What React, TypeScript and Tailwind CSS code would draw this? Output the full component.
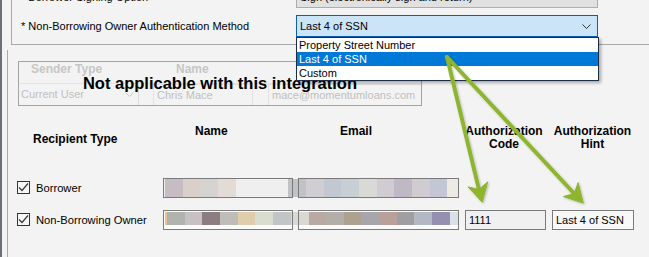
import React from "react";

type Block = [number, string];

const row1Name: Block[] = [[1, "#efefef"], [18, "#c5bcc4"], [17, "#d9d1c9"], [18, "#d5d4d0"], [18, "#e3dcd6"], [52, "#efefef"], [0, "#c0c3c6"]];
const row1Email: Block[] = [[7, "#c0c3c6"], [18, "#d0ced3"], [17, "#c2c8d2"], [18, "#c8cfd4"], [18, "#d9dad5"], [17, "#d1cbd2"], [18, "#c1b8c6"], [18, "#d0ccd0"], [17, "#c3c6d4"], [0, "#ede9e3"]];
const row2Name: Block[] = [[1, "#fafafa"], [2, "#e8c48a"], [18, "#b1b3ae"], [17, "#c7c1c4"], [18, "#8b7d82"], [18, "#bfbdb8"], [17, "#dfcdab"], [18, "#d8ddd0"], [18, "#c2c5c8"], [0, "#dad8d3"]];
const row2Email: Block[] = [[10, "#dad8d3"], [17, "#b8aaa2"], [18, "#b2aea8"], [17, "#ada190"], [18, "#a8a6ab"], [18, "#b9a19a"], [17, "#a19ea3"], [18, "#b3b8c5"], [18, "#9690b0"], [0, "#d9e0e6"]];

// blurred-out pixels, 0 width = take the rest
function Mosaic({ blocks, h }: { blocks: Block[]; h: string }) {
  return (
    <div className={`flex w-full ${h}`}>
      {blocks.map(([w, c], i) => (
        <div key={i} className={w ? "shrink-0 h-full" : "flex-1 h-full"} style={{ width: w || undefined, background: c }} />
      ))}
    </div>
  );
}

function Chevron({ color = "#333" }: { color?: string }) {
  return (
    <svg width="9" height="5" viewBox="0 0 9 5" className="shrink-0">
      <path d="M0.5 0.5 L4.5 4.5 L8.5 0.5" fill="none" stroke={color} strokeWidth="1" />
    </svg>
  );
}

function Check() {
  return (
    <div className="w-[13px] h-[13px] shrink-0 border border-[#333] bg-[#f7f7f7]">
      <svg width="11" height="11" viewBox="0 0 11 11">
        <path d="M1 5.5 L4 8.5 L10 1.5" fill="none" stroke="#3a3a3a" strokeWidth="1.2" />
      </svg>
    </div>
  );
}

export default function App() {
  return (
    <div className="relative w-[649px] h-[257px] overflow-hidden bg-[#f3f3f3] flex font-['Liberation_Sans',Arial,sans-serif] text-black">
      <div className="w-[2px] shrink-0 h-full bg-[#6b6f76]" />

      <div className="flex-1 flex flex-col min-w-0">
        {/* signing options group */}
        <div className="ml-[9px] h-[45px] shrink-0 border-l border-b border-[#a9a9a9] flex flex-col text-[11px]">
          <div className="flex items-center h-[21px] -mt-[13px] shrink-0">
            <div className="w-[284px] pl-[9px]">* Borrower Signing Option</div>
            <div className="w-[302px] h-full flex items-center justify-between bg-[#e1e1e1] border border-[#adadad] pl-[3px] pr-[6px]">
              <span>Sign (electronically sign and return)</span>
              <Chevron />
            </div>
          </div>
          <div className="flex items-center h-[22px] mt-[7px] shrink-0">
            <div className="w-[284px] pl-[9px]">* Non-Borrowing Owner Authentication Method</div>
            <div className="w-[302px] h-full flex items-center justify-between bg-[#cce4f7] border border-[#0a5fb4] pl-[3px] pr-[6px]">
              <span>Last 4 of SSN</span>
              <Chevron />
            </div>
          </div>
        </div>

        <div className="ml-[5px] mt-[5px] flex-1 border-l border-[#a9a9a9] flex flex-col">
          {/* sender box */}
          <div className="relative ml-[10px] mt-[11px] w-[404px] h-[45px] shrink-0 border border-[#a3a3a3] flex flex-col">
            <div className="flex items-start h-[22px] pt-[1px] leading-[13px] text-[12px] font-bold text-[#c6c6c6] border-b border-[#e4e4e4]">
              <div className="w-[135px] pl-[12px]">Sender Type</div>
              <div className="pl-[22px]">Name</div>
            </div>
            <div className="flex flex-1 text-[11px] text-[#c0c0c0]">
              <div className="w-[120px] flex items-center justify-between pl-[2px] pr-[4px] border-r border-[#dcdcdc]">
                <span>Current User</span>
                <Chevron color="#c8c8c8" />
              </div>
              <div className="ml-[14px] w-[100px] flex items-center pl-[3px] border border-b-0 border-[#e2e2e2]">Chris Mace</div>
              <div className="ml-[15px] flex-1 flex items-center pl-[3px] border-l border-t border-[#e2e2e2]">mace@momentumloans.com</div>
            </div>
            <div className="absolute inset-0 flex items-center justify-center text-[16.5px] font-bold text-black">
              Not applicable with this integration
            </div>
          </div>

          {/* recipients */}
          <div className="ml-[9px] mt-[19px] flex flex-col">
            <div className="flex h-[28px] text-[12px] font-bold leading-[13px]">
              <div className="w-[146px] pl-[16px] self-center">Recipient Type</div>
              <div className="w-[135px] pl-[32px]">Name</div>
              <div className="w-[167px] pl-[42px]">Email</div>
              <div className="w-[87px]"><div className="w-[78px] text-center">Authorization<br />Code</div></div>
              <div className="w-[81px] text-center">Authorization<br />Hint</div>
            </div>

            <div className="flex items-center h-[20px] mt-[25px] text-[11.2px]">
              <div className="w-[146px] flex items-center gap-[6px]">
                <Check />
                <span>Borrower</span>
              </div>
              <div className="w-[130px] h-full border border-[#7a7a7a] bg-[#efefef]">
                <Mosaic blocks={row1Name} h="h-full" />
              </div>
              <div className="w-[5px] h-[18px] bg-[#c0c3c6]" />
              <div className="w-[161px] h-full border border-[#7a7a7a] bg-[#efefef]">
                <Mosaic blocks={row1Email} h="h-full" />
              </div>
            </div>

            <div className="flex items-center h-[20px] mt-[12px] text-[11.2px]">
              <div className="w-[146px] flex items-center gap-[6px]">
                <Check />
                <span>Non-Borrowing Owner</span>
              </div>
              <div className="w-[130px] h-full border border-[#7a7a7a] bg-[#fbfbfb] pt-[1px]">
                <Mosaic blocks={row2Name} h="h-[13px]" />
              </div>
              <div className="w-[5px] h-[13px] self-start mt-[2px] bg-[#dad8d3]" />
              <div className="w-[161px] h-full border border-[#7a7a7a] bg-[#fbfbfb] pt-[1px]">
                <Mosaic blocks={row2Email} h="h-[13px]" />
              </div>
              <div className="ml-[6px] w-[81px] h-full border border-[#7a7a7a] bg-[#f0f0f0] flex items-center pl-[3px] text-[11px]">1111</div>
              <div className="ml-[6px] w-[82px] h-full border border-[#7a7a7a] bg-[#f8f8f8] flex items-center pl-[3px] text-[11px]">Last 4 of SSN</div>
            </div>
          </div>
        </div>
      </div>

      {/* open dropdown list */}
      <div className="absolute left-[296px] top-[37px] w-[303px] border border-[#1e2c44] bg-white text-[11px] leading-[14px] shadow-[2px_2px_3px_rgba(0,0,0,0.3)]">
        <div className="h-[14px] pl-[2px]">Property Street Number</div>
        <div className="h-[14px] pl-[2px] bg-[#0078d7] text-white">Last 4 of SSN</div>
        <div className="h-[14px] pl-[2px]">Custom</div>
      </div>

      {/* annotation arrows */}
      <svg className="absolute inset-0 pointer-events-none" width="649" height="257" viewBox="0 0 649 257">
        <defs>
          <filter id="sh" x="-20%" y="-20%" width="140%" height="140%">
            <feDropShadow dx="1" dy="1" stdDeviation="1" floodColor="#000" floodOpacity="0.25" />
          </filter>
        </defs>
        <g filter="url(#sh)" fill="#8db52e" stroke="#8db52e" strokeLinecap="round" strokeLinejoin="round">
          <line x1="447" y1="57" x2="478.9" y2="189.4" strokeWidth="4" fill="none" />
          <polygon points="482,202 468.1,186.9 478.9,189.4 487.5,182.1" strokeWidth="1" />
          <line x1="447" y1="57" x2="574.1" y2="193.5" strokeWidth="4" fill="none" />
          <polygon points="583,203 563.4,196.6 574.1,193.5 578,183" strokeWidth="1" />
        </g>
      </svg>
    </div>
  );
}
